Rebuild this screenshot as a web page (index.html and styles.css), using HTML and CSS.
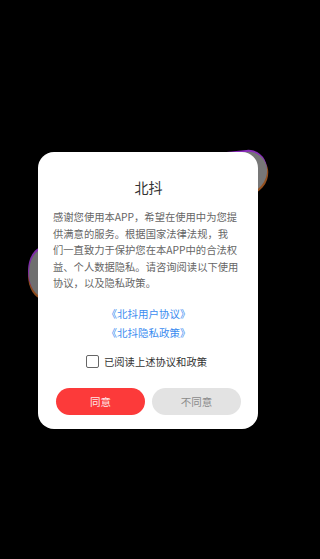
FILE: index.html
```html
<!DOCTYPE html>
<html lang="zh">
<head>
<meta charset="utf-8">
<link rel="stylesheet" href="styles.css">
</head>
<body>
<div class="stage">
  <div class="blob blob-right"></div>
  <div class="blob blob-left"></div>
  <div class="dialog">
    <div class="title">北抖</div>
    <p class="body">感谢您使用本APP，希望在使用中为您提<br>供满意的服务。根据国家法律法规，我<br>们一直致力于保护您在本APP中的合法权<br>益、个人数据隐私。请咨询阅读以下使用<br>协议，以及隐私政策。</p>
    <div class="links">
      <a class="link">《北抖用户协议》</a>
      <a class="link">《北抖隐私政策》</a>
    </div>
    <label class="check">
      <span class="box"></span>
      <span class="check-text">已阅读上述协议和政策</span>
    </label>
    <div class="buttons">
      <button class="btn agree">同意</button>
      <button class="btn disagree">不同意</button>
    </div>
  </div>
</div>
</body>
</html>
```
FILE: styles.css
```css
html, body {
  margin: 0;
  padding: 0;
  background: #000;
  width: 320px;
  height: 559px;
  overflow: hidden;
  font-family: "Noto Sans CJK SC", "Noto Sans", sans-serif;
}
.stage {
  position: relative;
  width: 220px;
  margin: 152px 0 0 38px;
}
.blob {
  position: absolute;
  background: #777;
}
.blob-right {
  left: 170px;
  top: -2px;
  width: 57px;
  height: 42px;
  border-radius: 10px 22px 30px 0 / 4px 22px 28px 0;
  box-shadow: 0 -2px 0 0 #8a2dbb, 1px 2px 0 0 #94501f;
  transform: rotate(-6deg);
  transform-origin: 100% 0;
}
.blob-left {
  left: -9px;
  top: 97px;
  width: 30px;
  height: 48px;
  border-radius: 50%;
  background: #6f6f6f;
  box-shadow: -1px -2px 0 0 #7e2ca8, -1px 2px 0 0 #8d4a1c;
}
.dialog {
  position: relative;
  background: #fff;
  border-radius: 16px;
  padding: 25px 17px 14px 18px;
  display: flex;
  flex-direction: column;
  align-items: center;
}
.title {
  font-size: 14px;
  line-height: 20px;
  color: #333;
}
.body {
  margin: 12px 0 0 -3px;
  font-size: 10.3px;
  line-height: 16.5px;
  color: #666;
  white-space: nowrap;
  align-self: flex-start;
}
.links {
  margin-top: 12px;
  display: flex;
  flex-direction: column;
  align-items: center;
}
.link {
  font-size: 10.5px;
  line-height: 19px;
  color: #3b8cf0;
}
.check {
  margin-top: 13px;
  display: flex;
  align-items: center;
  gap: 5px;
  margin-left: -4px;
}
.box {
  width: 11px;
  height: 11px;
  border: 1.5px solid #666;
  border-radius: 2px;
}
.check-text {
  font-size: 10.3px;
  line-height: 14px;
  color: #333;
}
.buttons {
  margin-top: 19px;
  display: flex;
  gap: 7px;
  align-self: stretch;
}
.btn {
  flex: 1;
  height: 27px;
  border: none;
  border-radius: 14px;
  font-family: inherit;
  font-size: 10.5px;
  padding: 0;
}
.agree {
  background: #fc3a3a;
  color: #ffe9e9;
}
.disagree {
  background: #e3e3e3;
  color: #8a8a8a;
}
```
